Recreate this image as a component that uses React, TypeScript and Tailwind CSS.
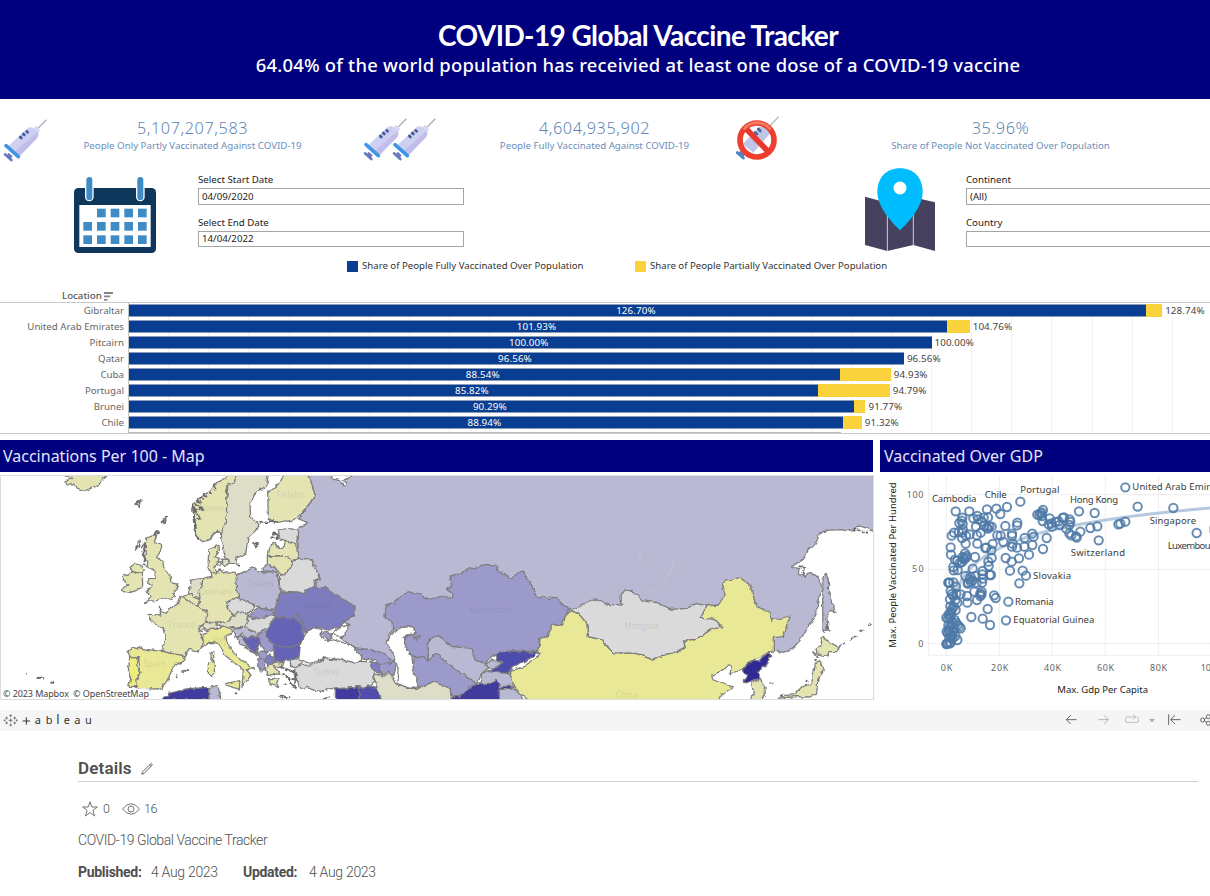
import React from "react";

type Bar = { name: string; full: number; total: number };

const bars: Bar[] = [
  { name: "Gibraltar", full: 126.7, total: 128.74 },
  { name: "United Arab Emirates", full: 101.93, total: 104.76 },
  { name: "Pitcairn", full: 100, total: 100 },
  { name: "Qatar", full: 96.56, total: 96.56 },
  { name: "Cuba", full: 88.54, total: 94.93 },
  { name: "Portugal", full: 85.82, total: 94.79 },
  { name: "Brunei", full: 90.29, total: 91.77 },
  { name: "Chile", full: 88.94, total: 91.32 },
];

const PX_PER_PERCENT = 8.025;

function Syringe() {
  return (
    <svg width="44" height="44" viewBox="0 0 132 132" className="shrink-0">
      <path d="M103 30L130 2" stroke="#b3abb5" strokeWidth="4" />
      <path d="M99 20L112 34L104 42L90 29Z" fill="#d6daf3" />
      <path d="M16 82L74 27Q84 22 92 28L104 40Q109 48 102 58L48 113Z" fill="#cdd0f1" />
      <path d="M34 99L105 38Q108 49 102 58L50 111Z" fill="#c3bdeb" />
      <path d="M52 54l3 3M61 45l3 3M71 37l3 3" stroke="#41599b" strokeWidth="8" strokeLinecap="round" />
      <path d="M17 101L29 112L21 122L10 111Z" fill="#7478bb" />
      <path d="M9 80L46 113" stroke="#4095e4" strokeWidth="11" strokeLinecap="round" />
      <path d="M6 106L25 123" stroke="#6579c4" strokeWidth="8" strokeLinecap="round" />
    </svg>
  );
}

function NoSyringe() {
  return (
    <svg width="44" height="46" viewBox="108 15 132 138">
      <path d="M205 52L236 20" stroke="#bdb8c5" strokeWidth="4" />
      <path d="M128 102L177 52L205 48L212 68L160 128Z" fill="#bfc5e8" />
      <path d="M165 67l6 5M175 57l6 6" stroke="#49659f" strokeWidth="8" strokeLinecap="round" />
      <path d="M112 128L130 144M121 128l8 7" stroke="#4c85c8" strokeWidth="9" strokeLinecap="round" />
      <circle cx="171" cy="90" r="51" fill="none" stroke="#ee3e2e" strokeWidth="17" />
      <path d="M137 55L205 125" stroke="#e9372b" strokeWidth="17" />
      <path d="M131 58Q147 38 172 38Q197 39 212 59" fill="none" stroke="#f57d64" strokeWidth="8" />
    </svg>
  );
}

function CalendarIcon() {
  const cells: [number, number][] = [];
  for (let r = 0; r < 3; r++) for (let c = 0; c < 5; c++) if (r || c) cells.push([c, r]);
  return (
    <svg width="82" height="76" viewBox="0 0 246 228" className="shrink-0">
      <rect y="33" width="246" height="195" rx="13" fill="#0f375b" />
      <rect x="16" y="84" width="214" height="126" fill="#fff" />
      {cells.map(([c, r]) => (
        <rect key={`${c}-${r}`} x={28 + c * 41} y={95 + r * 40} width="26" height="26" fill="#3e8bc5" />
      ))}
      {[46, 199].map((x) => (
        <g key={x} strokeLinecap="round">
          <path d={`M${x} 36V60`} stroke="#fff" strokeWidth="26" />
          <path d={`M${x} 9V61`} stroke="#3e8bc5" strokeWidth="18" />
        </g>
      ))}
    </svg>
  );
}

function PinIcon() {
  return (
    <svg width="72" height="84" viewBox="0 0 216 252" className="shrink-0">
      <path d="M3 86L70 104L148 88L213 103V249L148 231L70 249L3 231Z" fill="#46415f" />
      <path d="M70 104V249M148 88V231" stroke="#eee" strokeWidth="2.5" />
      <path d="M108 187C84 164 40 117 40 72C40 29 67 1 108 1S176 29 176 72C176 117 132 164 108 187Z" fill="#00bdff" />
      <circle cx="108" cy="60" r="19.500" fill="#fff" />
    </svg>
  );
}

function Kpi({ value, label }: { value: string; label: string }) {
  return (
    <div className="flex flex-col items-center pl-px text-[#6a8fba]">
      <span className="text-[16.3px] leading-[20px] font-light tracking-[0.55px] text-[#5f87b5]">{value}</span>
      <span className="whitespace-nowrap text-[9.7px] leading-[16px]">{label}</span>
    </div>
  );
}

function Field({ label, value, short }: { label: string; value: string; short?: boolean }) {
  return (
    <label className="flex flex-col text-[9.7px] text-[#222]">
      <span className="h-[15px] leading-[15px]">{label}</span>
      <span className={`mt-[1px] border border-[#a5a5a5] bg-white pl-[3px] ${short ? "h-[16px] leading-[14px]" : "h-[17px] leading-[15px]"}`}>{value}</span>
    </label>
  );
}

const Y1 = "#e4e4b3";
const Y2 = "#e8e896";
const TAN = "#deddc7";
const GREY = "#dadadb";
const LAV = "#bab9d3";
const MID = "#9b9acb";
const BLU = "#7d7cbe";
const DEEP = "#6564b5";

const west: [string, string][] = [
  [Y1, "M180 15L198 20L215 22L198 35L200 44L220 45L235 57L255 62L275 54L298 42L320 18V10H180Z"],
  [Y1, "M440 205L455 198L469 200L462 218L482 222L486 230L470 262L488 275L493 300L510 315L513 338L533 343L532 357L519 370L526 380L508 387L480 386L468 392L450 393L435 402L433 399L456 377L447 370L438 362L455 355L456 344L442 335L446 326L464 325L466 304L458 294L442 293L443 274L432 262L442 242L432 235Z"],
  [Y1, "M397 305L427 309L428 348L421 358L381 370L366 361L384 343L370 332L371 313L384 316Z"],
  [Y1, "M397 305L390 292L404 282L422 285L433 300L427 310Z"],
  [Y1, "M578 120L582 100L600 83L630 64L655 35L675 24L683 10H710L702 42L680 47L682 130L670 192L654 181L638 193L630 208L608 215L587 197L584 150Z"],
  [TAN, "M683 45L702 42L710 10H805L800 48L770 65L750 100L752 140L774 163L768 180L744 203L737 250L710 264L708 280L687 280L678 262L667 230L664 190L678 150Z"],
  [Y1, "M803 65L835 45L855 10H926L945 75L925 105L890 145L860 155L830 160L805 145Z"],
  [Y1, "M626 240L654 226L655 241L645 260L658 265L650 285L642 294L652 308L634 309L624 290Z"],
  [TAN, "M664 268L683 267L684 283L672 290L665 281ZM652 275L661 276L660 290L652 288Z"],
  [Y1, "M634 309L652 308L661 300L675 308L705 310L712 318L709 340L718 366L715 382L685 398L680 410L704 439L690 450L680 460L614 458L620 424L596 414L600 380L594 362L608 324L636 319Z"],
  [TAN, "M565 374L574 330L608 324L606 350L594 362L598 388L582 382L579 373Z"],
  [Y1, "M550 378L579 373L582 382L596 388L598 413L586 408L545 382Z"],
  [Y1, "M444 433L482 435L480 424L498 430L512 412L532 403L539 383L550 380L587 407L622 424L617 455L600 467L604 482L596 484L612 508L608 529L594 543L568 538L556 557L487 549L495 500L490 478L466 460L449 448Z"],
  [TAN, "M595 477L618 453L648 460L650 477L633 478L622 485L612 475L604 484Z"],
  [Y2, "M384 542L402 530L440 538L488 545L554 558L549 573L519 591L509 617L500 634L481 657L413 656L401 650L420 607L416 564L389 562Z"],
  ["#eded7e", "M389 562L416 564L410 587L420 607L410 623L412 650L386 649L392 625L385 607Z"],
  [Y2, "M607 490L622 485L633 478L650 477L672 466L693 470L694 490L678 497L680 515L706 556L763 598L740 596L752 616L739 635L726 650L730 600L675 556L655 520L628 517L606 530L612 507Z"],
  [Y2, "M680 640L720 632L718 657L700 653L680 645Z"],
  [Y2, "M625 582L642 573L644 610L635 619L625 612ZM633 548L641 546L641 571L633 570ZM543 604L556 600L550 611Z"],
  [GREY, "M680 400L708 383L738 388L766 408L755 422L740 430L718 429L704 438L684 418Z"],
  [TAN, "M650 460L690 453L694 438L706 438L715 425L744 430L745 454L732 473L695 472L653 466Z"],
  [LAV, "M708 316L760 293L778 307L830 305L837 340L840 366L827 417L790 418L767 406L717 384L710 358Z"],
  [LAV, "M785 294L802 283L826 294L825 305L790 303Z"],
  [GREY, "M836 180L875 173L896 179L894 213L888 222L855 211L837 206Z"],
  [Y1, "M805 236L818 218L826 219L838 238L852 230L856 214L890 223L894 267L876 270L850 258L802 258Z"],
  [Y1, "M802 258L850 258L878 269L874 287L854 314L838 312L826 293L802 282Z"],
  [GREY, "M838 315L857 314L879 274L907 265L935 271L960 325L945 332L948 365L900 367L842 362L838 345Z"],
  [MID, "M746 438L770 415L819 418L820 430L810 437L775 447Z"],
  [GREY, "M738 468L746 444L775 447L812 436L826 443L802 477L770 488L742 476Z"],
  [LAV, "M696 478L725 474L738 468L745 480L774 490L770 501L733 500L725 490L713 502Z"],
  [LAV, "M700 485L714 502L728 501L730 512L773 554L768 557L720 520Z"],
  [DEEP, "M728 503L776 503L779 517L766 551L750 538Z"],
  [MID, "M775 493L793 480L819 515L823 540L801 547L782 525Z"],
  [MID, "M768 545L790 543L801 548L796 575L781 564Z"],
  [MID, "M777 565L790 566L796 597L784 603L776 585Z"],
  [BLU, "M796 563L812 555L826 563L825 580L803 583L794 575Z"],
  [DEEP, "M802 477L823 443L870 440L895 436L906 447L912 484L910 510L898 525L860 532L820 524L797 497Z"],
  [BLU, "M875 440L895 436L915 455L920 486L910 488L903 460Z"],
  [DEEP, "M820 525L860 532L905 522L895 562L870 570L844 575L824 576Z"],
  [Y1, "M795 598L806 585L825 580L852 577L848 587L822 591L840 610L826 614L812 614L802 617Z"],
  [Y1, "M805 626L835 627L830 640L836 652L811 644Z"],
  [BLU, "M842 366L915 368L920 355L980 352L1000 372L1065 408L1063 438L1032 455L1022 472L980 478L945 475L920 485L909 458L895 436L870 446L819 440L826 415Z"],
  [GREY, "M870 570L899 565L908 578L884 592L872 590ZM884 598L899 587L940 584L975 565L1020 572L1065 574L1108 575L1120 593L1125 635L1108 652L1048 650L1020 660L990 655L970 664L946 662L919 652L900 656L887 620Z"],
  ["#403d9f", "M484 690L508 670L555 657L625 652L627 690Z"],
  [LAV, "M627 653L651 647L660 666L662 690H628Z"],
  ["#3f3b9d", "M1006 692V657L1080 650V692Z"],
  ["#514eab", "M1077 692V655L1104 648L1132 652L1147 692Z"],
  [MID, "M1060 533L1108 538L1148 548L1178 573L1168 580L1140 580L1122 568L1088 568Z"],
  [BLU, "M1110 573L1138 580L1144 615L1120 600Z"],
  [MID, "M1136 582L1168 580L1192 572L1182 615L1166 603L1145 618Z"],
];

const central: [string, string][] = [
  [MID, "M463 430L470 405L485 398L495 405L495 392L520 372L545 367L575 372L580 382L600 387L640 378L668 385L668 372L650 358L665 350L660 318L690 310L715 298L770 283L800 290L805 305L825 312L845 325L860 311L880 305L902 340L925 385L940 378L956 385L975 382L1000 405L1020 418L1002 440L995 465L965 465L955 500L930 505L922 545L845 543L800 550L765 580L735 570L725 540L670 530L625 497L595 508V575L560 560L545 558L525 530L520 505L555 490L550 470L510 472L490 480L490 460L465 440Z"],
  [LAV, "M595 575V508L625 497L670 530L725 535L735 570L765 580L782 590L755 610L740 640L680 600L645 575L620 550L605 560Z"],
  [MID, "M548 565L575 557L595 575L605 560L620 550L645 575L680 600L740 640L690 680L665 685L660 655L610 635L565 655L550 610Z"],
  [TAN, "M430 610L460 620L480 605L495 640L530 655L565 655L610 635L660 655L665 692H455L440 650Z"],
  [LAV, "M755 610L780 600L840 610L855 650L800 655L750 645Z"],
  [LAV, "M808 660L850 653L870 670L880 692H808Z"],
  ["#3f3b9d", "M663 692L665 680L690 680L720 650L750 640L790 640L800 628L810 655L835 645L850 652L808 660V692Z"],
  [LAV, "M764 586L785 570L820 580L798 597L780 593Z"],
  ["#4e4bac", "M795 555L810 545L845 543L925 548L900 565L860 585L830 610L775 605L800 590L820 577L800 570Z"],
];

const east: [string, string][] = [
  [Y2, "M35 465H65L72 440L95 422L115 430L145 465V500L180 508L220 548L290 550L335 568L375 553L410 548L435 530L430 510L470 508L510 480L545 470L525 448L483 445L497 408L535 405L555 375L548 345L560 330L600 323L630 345L650 408L690 430L695 450L750 438L730 500L700 503V545L685 550L640 570L605 600L570 612L575 590L565 585L540 605L515 615L520 630L560 645L580 650L545 675L535 692H-35L-45 678L-65 670L-80 640L-92 605L-50 590L-5 560L0 505L25 500Z"],
  [GREY, "M95 420L130 402L160 387L205 403L245 405L243 375L257 358L295 375L305 392L350 398L395 418L440 415L470 400L497 408L483 445L525 448L545 470L510 480L470 508L430 510L435 530L410 548L375 553L335 568L290 550L220 548L180 508L145 500V465L115 430Z"],
  ["#302c94", "M605 600L640 570L655 573L685 547L692 555L680 585L650 607L660 626L635 637L610 634L620 616Z"],
  [Y1, "M635 637L660 626L675 650L676 675L660 692H635L640 665Z"],
  [Y1, "M848 499L868 516L898 533L890 545L870 545L860 558L831 552L828 538L842 528Z"],
  [Y1, "M826 582L840 574L850 600L833 632L830 672L810 681L765 680L715 685L735 676L763 674L785 651L815 640L820 612Z"],
  [LAV, "M858 310L865 330L866 365L885 425L872 420L860 440L865 480L849 482L848 400L849 330Z"],
];

const RUSSIA =
  "M237 0L240 45L256 75L240 100L207 146L233 160L210 170L205 180L204 265L245 270L255 300L270 325L258 332V355L290 352L305 370L330 390L375 408L373 438L342 455L357 462L345 475L348 493L330 503L370 532L410 540L450 550L485 575L500 568L470 515L480 490L500 470L950 520L1400 560L1630 545L1644 543L1665 549L1690 535L1730 480L1760 430L1765 385L1776 360L1770 328L1747 308L1732 310L1728 324L1705 312L1708 295L1685 293L1695 283L1720 268L1732 245L1762 212L1766 195L1785 181L1835 179L1850 183L1875 178L1890 168L1910 175L1950 192V0Z";

// Broken outlines of small islands and fjords.
const islets =
  "M406 102l8-6l8-3l-4 10l-3 8l-2-8zM488 160l3-14l8-6l-5 20zM463 193l8-12l5 5l-8 10zM408 240l5-25l10-6l-5 20zM424 235l10-15l2 20l-8 15l8 10l-6 15l8 10M578 100l5 25l-2 25l6 20l-2 20l10 15M585 100l25 20l-28-5l20 30l-20 5l10 25l-8-10M590 90l15 12M600 80l12 10M610 72l12 10M625 62l10 12M640 45l8 16M775 155l25 2l20-4l10 6M820 190l14 4l-4 12l-14-3zM762 222l14-5l-8 18zM712 285l8 3M112 624l14-1l6 3M154 637l8 2M80 606l2 3M560 600l8 2M528 618l4 2M476 410l8 12M840 590l30 10l20 15M846 610l24 15l20 5M850 640l10 6M870 640l20 14M865 620l12 30M880 600l8 30l-6 20M835 680l36 2M705 668l6 4M970 688l20-8";

const eastIslets =
  "M776 288l20 6l-12 8l12 18l-10-5M820 548l12 8l-6 20M900 530l20-14M930 508l22-12M960 485l12-8M985 467l8-8M692 638l8 6M798 636l3-6M720 678l14-6M860 470l10 14M850 480l4 8M940 178l30 6l20 6";

const mapLabels: [string, number, number, number][] = [
  ["Norway", 634, 124, 76],
  ["Finland", 870, 84, 80],
  ["Germany", 648, 376, 98],
  ["Poland", 782, 351, 76],
  ["Ukraine", 952, 418, 86],
  ["France", 545, 474, 80],
  ["Spain", 464, 590, 66],
  ["Italy", 660, 520, 46],
  ["Turkey", 980, 616, 78],
  ["Kazakhstan", 1472, 430, 128],
  ["Mongolia", 1924, 477, 102],
  ["China", 1880, 684, 66],
];

function WorldMap() {
  const draw = (list: [string, string][]) => list.map(([fill, d], i) => <path key={i} d={d} fill={fill} />);
  return (
    <svg viewBox="3 18 2616 669" preserveAspectRatio="none" className="block h-full w-full">
      <filter id="coast" filterUnits="userSpaceOnUse" x="-40" y="-40" width="2720" height="800">
        <feTurbulence type="fractalNoise" baseFrequency=".06" numOctaves="2" seed="4" />
        <feDisplacementMap in="SourceGraphic" scale="13" xChannelSelector="R" yChannelSelector="G" />
      </filter>
      <g stroke="#7d7d7d" strokeWidth="3.8" strokeLinejoin="round" filter="url(#coast)">
        <path d={RUSSIA} fill={LAV} transform="translate(690)" />
        <path d="M990 0L1000 28L1020 32L1032 48L1038 40L1028 30L1045 25L1070 0Z" fill="#fff" />
        {draw(west)}
        <g transform="translate(690)">{draw(central)}</g>
        <path d="M920 486L940 473L962 478L966 486L960 492L975 514L1000 506L1060 532L1085 562L1084 572L1060 578L1020 568L975 564L930 580L896 570L902 520Z" fill="#fff" />
        <path d="M996 492L1020 472L1050 464L1040 475L1038 493L1015 498Z" fill="#fff" />
        <path d="M961 490L980 483L998 495L982 514L974 500Z" fill={MID} />
        <path d="M1160 515L1178 487L1210 472L1240 470L1245 488L1210 502L1214 525L1236 560L1240 600L1255 650L1230 655L1190 640L1195 590L1184 565Z" fill="#fff" />
        <g transform="translate(1620)">
          {draw(east)}
          <path d={eastIslets} fill="none" stroke="#666" strokeWidth="5" strokeDasharray="9 4" />
        </g>
        <path d={islets} fill="none" stroke="#686868" strokeWidth="5.5" strokeDasharray="14 2" />
        <path d="M1240 505l18-10l-4 12M1240 500l12 10" fill="none" />
      </g>
      <path d="M2020 270Q2018 325 1954 365M1920 250v30" fill="none" stroke="#c1c0d8" strokeWidth="4" />
      <g fontFamily="Noto Sans, sans-serif" fontSize="24" fill="#555" fillOpacity=".16" textAnchor="middle">
        {mapLabels.map(([t, x, y, w]) => (
          <text key={t} x={x} y={y} textLength={w}>{t}</text>
        ))}
      </g>
      <rect x="6" y="655" width="442" height="34" fill="#fff" fillOpacity=".85" />
      <text x="9" y="682" fontFamily="Noto Sans, sans-serif" fontSize="27" fill="#444" textLength="198">© 2023 Mapbox</text>
      <text x="219" y="682" fontFamily="Noto Sans, sans-serif" fontSize="27" fill="#444" textLength="228">© OpenStreetMap</text>
    </svg>
  );
}

const points: [number, number][] = [
  [748, 154], [433, 197], [785, 212], [892, 216], [962, 291], [668, 313], [656, 231], [609, 226], [748, 257], [733, 263], [727, 265],
  [393, 213], [361, 218], [333, 220], [373, 234], [239, 226], [280, 226], [501, 222], [497, 229], [484, 236], [490, 237], [498, 240],
  [521, 247], [500, 255], [564, 244], [560, 246], [581, 250], [583, 258], [548, 256], [518, 265], [526, 262], [551, 267], [580, 267],
  [528, 272], [538, 258], [571, 278], [664, 271], [643, 276], [613, 287], [586, 298], [600, 301], [602, 305], [580, 292], [512, 306],
  [501, 339], [469, 293], [473, 302], [446, 306], [469, 327], [445, 332], [459, 356], [429, 367], [424, 260], [423, 268], [388, 270],
  [408, 293], [408, 300], [374, 299], [364, 298], [382, 318], [410, 323], [408, 332], [423, 335], [389, 366], [407, 377], [402, 404],
  [440, 404], [450, 419], [430, 442], [397, 497], [390, 553], [342, 567], [320, 548], [286, 543], [335, 519], [354, 478], [359, 486],
  [313, 472], [317, 467], [303, 492], [274, 500], [273, 480], [295, 467], [345, 417], [341, 417], [320, 405], [318, 440], [298, 420],
  [290, 398], [297, 363], [338, 390], [337, 377], [347, 366], [346, 343], [350, 324], [331, 335], [328, 336], [304, 323], [269, 323],
  [304, 240], [292, 247], [307, 250], [323, 245], [336, 244], [318, 257], [300, 272], [325, 270], [340, 271], [347, 272], [336, 278],
  [314, 290], [303, 298], [281, 295], [270, 299], [259, 245], [257, 254], [260, 264], [250, 261], [261, 281], [259, 290], [248, 288],
  [234, 290], [227, 299], [258, 306], [224, 334], [225, 356], [237, 371], [244, 375], [260, 363], [267, 352], [270, 365], [258, 378],
  [251, 381], [232, 393], [233, 403], [245, 402], [268, 420], [281, 430], [290, 433], [275, 443], [285, 438], [302, 440], [320, 428],
  [221, 440], [217, 440], [232, 439], [240, 452], [224, 465], [228, 474], [241, 474], [254, 475], [222, 490], [244, 500], [223, 511],
  [239, 522], [218, 535], [211, 545], [222, 546], [236, 552], [229, 560], [245, 567], [254, 577], [221, 575], [212, 586], [230, 588],
  [238, 600], [244, 612], [220, 605], [216, 622], [211, 624], [224, 619], [230, 607], [215, 592], [235, 575], [224, 528], [225, 598],
  [250, 572], [232, 480], [238, 493], [228, 520], [216, 548], [265, 370], [272, 360], [277, 441], [284, 423], [313, 480], [316, 476],
  [494, 232], [263, 368], [213, 623], [219, 583], [226, 568], [218, 440], [319, 415], [332, 274], [222, 622], [221, 588], [229, 597],
  [217, 568], [240, 560], [224, 538], [233, 512],
];

const pointLabels: [string, number, number, number][] = [
  ["Cambodia", 168, 198, 133], ["Chile", 326, 186, 66], ["Portugal", 433, 171, 117], ["Hong Kong", 582, 201, 144],
  ["United Arab Emirates", 769, 163, 290], ["Singapore", 821, 265, 139], ["Luxembourg", 875, 340, 154],
  ["Switzerland", 584, 359, 163], ["Slovakia", 471, 428, 114], ["Romania", 417, 508, 116], ["Equatorial Guinea", 412, 562, 243],
];

function Scatter() {
  return (
    <svg viewBox="12 117 990 675" className="block h-full w-full" fontFamily="Noto Sans, sans-serif" fontSize="28.500">
      <g stroke="#eeeeee" strokeWidth="3" fill="none">
        <path d="M158 117V658H1002M158 176H1002M158 400H1002M211 117V658M370 117V658M529 117V658M688 117V658M848 117V658" />
        <path d="M158 623H1002" stroke="#dcdcdc" strokeDasharray="3 3" />
      </g>
      <path d="M214 560C240 385 330 345 480 294C600 262 780 235 1002 216" stroke="#b5c8df" strokeWidth="9" fill="none" />
      <g fill="none" stroke="#4e79a7" strokeOpacity=".85" strokeWidth="6">
        {points.map(([x, y], i) => <circle key={i} cx={x} cy={y} r="12.500" />)}
      </g>
      <g fill="#3b3b3b">
        {pointLabels.map(([t, x, y, w]) => <text key={t} x={x} y={y} textLength={w}>{t}</text>)}
        <text x="544" y="770" fill="#222" textLength="272">Max. Gdp Per Capita</text>
        <text transform="translate(59 635) rotate(-90)" fill="#222" textLength="496">Max. People Vaccinated Per Hundred</text>
        <path d="M1001 271V290" stroke="#888" strokeWidth="2" />
      </g>
      <g fill="#666" fontSize="27">
        <text x="92" y="186" textLength="50">100</text>
        <text x="108" y="409" textLength="35">50</text>
        <text x="127" y="632">0</text>
        <text x="194" y="704" textLength="35">0K</text>
        <text x="345" y="704" textLength="52">20K</text>
        <text x="504" y="704" textLength="51">40K</text>
        <text x="663" y="704" textLength="51">60K</text>
        <text x="822" y="704" textLength="51">80K</text>
        <text x="974" y="704">100K</text>
      </g>
    </svg>
  );
}

function TableauMark() {
  const plus: [number, number, number][] = [
    [31, 30, 6], [31, 16, 4], [31, 44, 4], [19, 23, 4], [43, 23, 4], [19, 38, 4], [43, 38, 4], [13, 30, 3], [49, 30, 3],
  ];
  return (
    <svg width="16" height="15" viewBox="8 8 48 45">
      <path d={plus.map(([x, y, r]) => `M${x - r} ${y}h${r * 2}M${x} ${y - r}v${r * 2}`).join("")} stroke="#666" strokeWidth="2.500" />
    </svg>
  );
}

function Toolbar() {
  return (
    <div className="mt-[10px] flex h-[21px] items-center bg-[#f5f5f5] pl-[3px]">
      <TableauMark />
      <svg width="72" height="16" viewBox="66 27 216 48" className="ml-[3px]" fontFamily="Noto Sans, sans-serif" fill="#333">
        <path d="M68 51H90M79 40V62" stroke="#333" strokeWidth="3" />
        {[["a", 104, 33], ["b", 137, 33], ["l", 169, 38], ["e", 191, 33], ["a", 223, 33], ["u", 255, 33]].map(([t, x, s], i) => (
          <text key={i} x={x} y="61" fontSize={s}>{t}</text>
        ))}
      </svg>
      <svg width="150" height="21" viewBox="564 822 450 63" className="ml-auto -mr-[4px]" fill="none" stroke="#666" strokeWidth="3">
        <path d="M602 851H571M584 838L571 851L584 864" />
        <path d="M667 851H697M684 838L697 851L684 864" stroke="#b5b5b5" />
        <path d="M780 843H753Q749 843 749 847V855Q749 859 753 859H783Q787 859 787 855V847Q787 843 783 843M772 836L780 843L772 850" stroke="#bdbdbd" />
        <path d="M819 849H837L828 859Z" fill="#aaa" stroke="none" />
        <path d="M878 835V867M914 851H884M897 838L884 851L897 864" />
        <circle cx="980" cy="852" r="6" /><circle cx="997" cy="842" r="6" /><circle cx="997" cy="862" r="6" />
        <path d="M985 849L992 845M985 855L992 859M1002 842h10M1002 862h10" />
      </svg>
    </div>
  );
}

export default function App() {
  return (
    <div className="h-[896px] w-[1210px] overflow-hidden bg-white font-['Noto_Sans',sans-serif]">
      <header className="flex h-[99px] flex-col items-center bg-[#00007f] pl-[66px] pt-[17px] whitespace-nowrap text-white">
        <h1 className="font-['Lato',sans-serif] text-[28px] leading-[36px] font-bold tracking-[-0.6px]">COVID-19 Global Vaccine Tracker</h1>
        <p className="text-[18.4px] leading-[24px] font-medium tracking-[0.23px]">64.04% of the world population has receivied at least one dose of a COVID-19 vaccine</p>
      </header>

      <section className="grid h-[69px] grid-cols-[50px_284px_130px_260px_66px_420px] pt-[19px]">
        <div className="pl-[3px] pt-[1px]"><Syringe /></div>
        <Kpi value="5,107,207,583" label="People Only Partly Vaccinated Against COVID-19" />
        <div className="flex pl-[29px]"><Syringe /><div className="-ml-[15px]"><Syringe /></div></div>
        <Kpi value="4,604,935,902" label="People Fully Vaccinated Against COVID-19" />
        <div className="-mt-[3px] pl-[12px]"><NoSyringe /></div>
        <Kpi value="35.96%" label="Share of People Not Vaccinated Over Population" />
      </section>

      <section className="flex h-[90px] items-start">
        <div className="ml-[74px] mt-[9px]"><CalendarIcon /></div>
        <div className="ml-[42px] mt-[4px] flex w-[266px] shrink-0 flex-col gap-[10px]">
          <Field label="Select Start Date" value="04/09/2020" />
          <Field label="Select End Date" value="14/04/2022" short />
        </div>
        <div className="ml-[400px]"><PinIcon /></div>
        <div className="ml-[30px] mt-[4px] flex w-[260px] shrink-0 flex-col gap-[10px]">
          <Field label="Continent" value="(All)" />
          <Field label="Country" value="" short />
        </div>
      </section>

      <div className="flex h-[16px] items-center pl-[347px] text-[9.65px] text-[#333]">
        <span className="mr-[4px] h-[11px] w-[11px] bg-[#083d91]" />
        <span className="w-[273px]">Share of People Fully Vaccinated Over Population</span>
        <span className="mr-[4px] h-[11px] w-[11px] bg-[#fad23c]" />
        <span>Share of People Partially Vaccinated Over Population</span>
      </div>

      <div className="mt-[15px] flex h-[14px] items-center border-b border-[#c9c9c9] pl-[62px] pt-px text-[9.7px] font-medium text-[#555]">
        <span className="w-[42px]">Location</span>
        <svg width="9" height="9" viewBox="0 0 9 9" fill="#858585"><path d="M0 0h9v2H0zM0 3.500h6v1.800H0zM0 7h3.500v1.800H0z" /></svg>
      </div>

      <div className="flex h-[131px] border-b border-[#c9c9c9] text-[9.8px]">
        <div className="w-[128px] shrink-0 pr-[4px] text-right text-[9.7px] text-[#666]">
          {bars.map((b) => <div key={b.name} className="h-[16px] leading-[16px]">{b.name}</div>)}
        </div>
        <div className="grow overflow-hidden border-l border-[#c4c4c4] bg-[repeating-linear-gradient(90deg,transparent_0px,transparent_39.15px,#f3f3f3_39.15px,#f3f3f3_40.15px)]">
          {bars.map((b) => (
            <div key={b.name} className="flex h-[16px] items-start pt-px leading-[14px]">
              <div className="flex h-[13px] shrink-0 items-center justify-center border-y border-[#8a9cb9] bg-[#083d91] pr-[3px] tracking-[0.1px] text-white" style={{ width: b.full * PX_PER_PERCENT }}>
                {b.full.toFixed(2)}%
              </div>
              <div className="h-[13px] shrink-0 bg-[#fad23c]" style={{ width: (b.total - b.full) * PX_PER_PERCENT }} />
              <span className="ml-[3px] tracking-[0.1px] text-[#444]">{b.total.toFixed(2)}%</span>
            </div>
          ))}
          <div className="mt-px h-px w-[712px] bg-[#b9bfc6]" />
        </div>
      </div>

      <main className="mt-[6px] flex h-[260px] gap-[7px]">
        <section className="flex w-[873px] shrink-0 flex-col">
          <h2 className="h-[32px] bg-[#00007f] pl-[3px] text-[16px] leading-[32px] text-[#e5e5f7]">Vaccinations Per 100 - Map</h2>
          <div className="mt-[3px] h-[225px] w-[874px] border border-[#dddddd]"><WorldMap /></div>
        </section>
        <section className="flex w-[330px] shrink-0 flex-col">
          <h2 className="h-[32px] bg-[#00007f] pl-[4px] text-[16px] leading-[32px] text-[#e5e5f7]">Vaccinated Over GDP</h2>
          <div className="mt-[3px] h-[225px]"><Scatter /></div>
        </section>
      </main>

      <Toolbar />

      <section className="ml-[78px] mr-[12px] font-['Roboto',sans-serif] text-[14px] text-[#4f4f4f]">
        <div className="flex h-[51px] items-end border-b border-[#cfcfcf] pb-[2px]">
          <h2 className="text-[17px] leading-[22px] font-semibold tracking-[0.15px]">Details</h2>
          <svg width="12" height="12" viewBox="0 0 12 12" fill="none" stroke="#555" className="mb-[4px] ml-[9px]">
            <path d="M.8 11.200L1.500 9L9.500 1Q10.200 .3 10.900 .9Q11.500 1.600 10.900 2.300L3 10.500ZM8.500 2L10 3.500" strokeWidth=".9" />
          </svg>
        </div>
        <div className="mt-[17px] flex h-[20px] items-center pl-[4px] text-[12.5px] font-light">
          <svg width="16" height="16" viewBox="0 0 16 16" fill="none" stroke="#666" strokeWidth=".9"><path d="M8 .8L9.800 6H15.400L10.900 9.300L12.600 15L8 11.600L3.400 15L5.100 9.300L.6 6H6.200Z" /></svg>
          <span className="ml-[5px] w-[19px]">0</span>
          <svg width="18" height="12" viewBox="0 0 18 12" fill="none" stroke="#666" strokeWidth=".9"><path d="M.5 6Q9-4.500 17.500 6Q9 16.500 .5 6Z" /><circle cx="9" cy="6" r="3" /></svg>
          <span className="ml-[4px] tracking-[-0.5px]">16</span>
        </div>
        <p className="mt-[11px] h-[20px] leading-[20px] font-light tracking-[-0.43px]">COVID-19 Global Vaccine Tracker</p>
        <div className="mt-[12px] flex h-[20px] items-center font-light tracking-[-0.3px]">
          <strong className="w-[73px] font-bold">Published:</strong>
          <span className="w-[92px]">4 Aug 2023</span>
          <strong className="w-[66px] font-bold">Updated:</strong>
          <span>4 Aug 2023</span>
        </div>
      </section>
    </div>
  );
}
